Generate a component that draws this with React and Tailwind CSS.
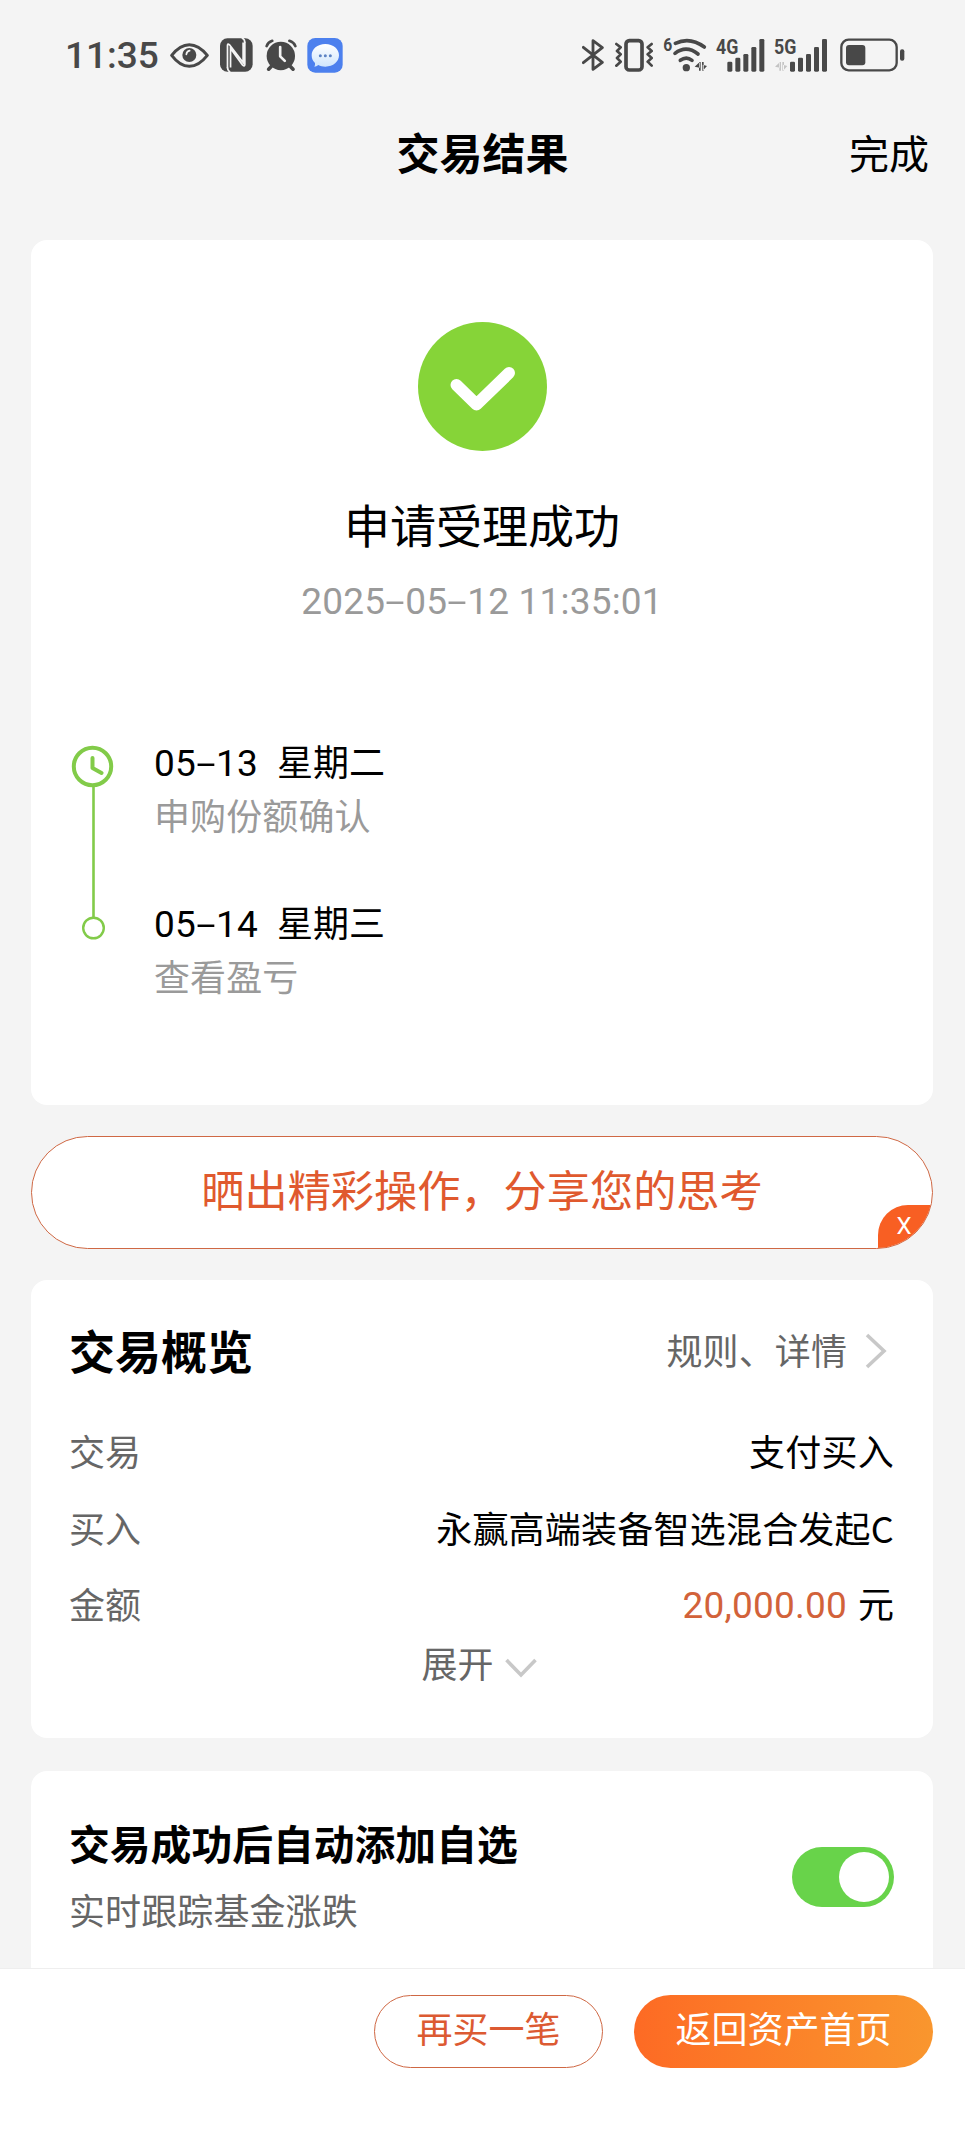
const details = [
  { label: '交易', value: '支付买入' },
  { label: '买入', value: '永赢高端装备智选混合发起C' },
]

const steps = [
  { date: '05-13', day: '星期二', note: '申购份额确认' },
  { date: '05-14', day: '星期三', note: '查看盈亏' },
]

// Digits are set in Roboto; hyphens are stretched to the width of a digit
function Digits({ children }) {
  return (
    <span className="font-['Roboto',sans-serif] text-[37px] leading-none tracking-[0.2px]">
      {children.split(/(-)/).map((part, i) =>
        part === '-' ? (
          <span key={i} className="inline-block w-5 text-center">
            <span className="inline-block origin-center scale-x-[1.9] scale-y-[0.9]">-</span>
          </span>
        ) : (
          part
        ),
      )}
    </span>
  )
}

function SignalBars({ x }) {
  return (
    <g>
      {[126, 114, 103, 82, 58].map((top, i) => (
        <rect key={top} x={x + i * 24} y={top} width="15" height={156 - top} rx="4" />
      ))}
    </g>
  )
}

function StatusBar() {
  return (
    <div className="flex h-[110px] items-start justify-between pt-[38px] pr-[60px] pl-[65px] text-[#484848]">
      <div className="flex h-[34px] items-center">
        <span className="w-[105px] font-['Roboto',sans-serif] text-[37px] leading-none font-medium">
          11:35
        </span>
        <svg viewBox="390 54 117 102" className="h-[34px] w-[39px]" fill="none">
          <path
            d="M395 106Q420 74 448 74Q476 74 502 106Q476 139 448 139Q420 139 395 106Z"
            stroke="currentColor"
            strokeWidth="9"
            strokeLinejoin="round"
          />
          <circle cx="448" cy="105" r="21" fill="currentColor" />
          <path d="M439 103Q440 94 449 92" stroke="#f4f4f4" strokeWidth="5" strokeLinecap="round" />
        </svg>
        <svg viewBox="540 57 97 100" className="ml-[11px] h-[34px] w-[33px]">
          <rect x="540" y="58" width="96" height="98" rx="22" fill="currentColor" />
          <path
            d="M562 146V79Q562 72 568 77L608 129V70M613 68V135Q613 143 606 136L571 88V144"
            fill="none"
            stroke="#f4f4f4"
            strokeWidth="5"
          />
          <path d="M604 57Q613 60 613 70M562 144Q562 153 570 157" fill="none" stroke="#f4f4f4" strokeWidth="5" />
        </svg>
        <svg viewBox="673 56 97 100" className="ml-3 h-[34px] w-[32px]" fill="none" strokeLinecap="round">
          <circle cx="721" cy="109" r="43" fill="currentColor" />
          <path d="M678 79Q682 67 695 63M747 63Q761 68 765 79" stroke="currentColor" strokeWidth="8" />
          <path d="M692 141L684 149M750 141L758 149" stroke="currentColor" strokeWidth="11" />
          <path d="M719 82V110L733 124" stroke="#f4f4f4" strokeWidth="8" strokeLinejoin="round" />
        </svg>
        <svg viewBox="798 54 108 105" className="ml-[10px] h-[35px] w-[36px]">
          <defs>
            <linearGradient id="bubble" x1="0" y1="0" x2="0" y2="1">
              <stop offset="0" stopColor="#fff" />
              <stop offset="1" stopColor="#cfe6fd" />
            </linearGradient>
          </defs>
          <rect x="799" y="54" width="106" height="104" rx="24" fill="#4c80ee" />
          <path
            d="M853 72C877 72 894 87 894 106S877 140 853 140C845 140 838 138 832 135Q826 140 820 140Q823 135 822 129C815 123 812 115 812 106C812 87 829 72 853 72Z"
            fill="url(#bubble)"
          />
          <g fill="#5c83c4">
            <circle cx="838" cy="107" r="4.5" />
            <circle cx="853" cy="107" r="4.5" />
            <circle cx="868" cy="107" r="4.5" />
          </g>
        </svg>
      </div>
      <div className="flex h-[34px] items-center">
        <svg viewBox="66 55 66 102" className="h-[34px] w-[22px]" fill="none" stroke="currentColor">
          <path d="M70 83L127 128L99 149V63L127 84L70 129" strokeWidth="8.5" strokeLinejoin="round" strokeLinecap="round" />
        </svg>
        <svg viewBox="165 55 117 102" className="ml-[11px] h-[34px] w-[39px]" fill="none" stroke="currentColor">
          <rect x="198" y="63" width="48" height="88" rx="10" strokeWidth="11" />
          <path
            d="M169 73L182 83L171 94L182 104L171 115L182 126L169 138M275 73L263 83L275 94L263 104L275 115L263 126L275 138"
            strokeWidth="8"
            strokeLinejoin="round"
            strokeLinecap="round"
          />
        </svg>
        <svg viewBox="306 37 138 138" className="ml-[8px] h-[46px] w-[46px]" fill="currentColor">
          <text x="310" y="95" fontSize="54" fontWeight="700" fontFamily="Roboto" textLength="27" lengthAdjust="spacingAndGlyphs">
            6
          </text>
          <g fill="none" stroke="currentColor" strokeWidth="11" strokeLinecap="round">
            <path d="M346 71Q390 50 433 82" />
            <path d="M345 101Q379 75 414 103" />
            <path d="M361 122Q379 109 396 122" />
          </g>
          <circle cx="379" cy="144" r="11" />
          <path d="M417 127V153H422V127ZM404 141L419 127V144ZM426 127V153H431V127ZM441 139L428 153V135Z" />
        </svg>
        <svg viewBox="466 37 150 138" className="ml-[7px] h-[46px] w-[50px]" fill="currentColor">
          <text x="469" y="104" fontSize="59" fontWeight="700" fontFamily="Roboto" textLength="67" lengthAdjust="spacingAndGlyphs">
            4G
          </text>
          <SignalBars x={503} />
        </svg>
        <svg viewBox="639 37 162 138" className="ml-[8px] h-[46px] w-[54px]" fill="currentColor">
          <text x="642" y="104" fontSize="59" fontWeight="700" fontFamily="Roboto" textLength="67" lengthAdjust="spacingAndGlyphs">
            5G
          </text>
          <path
            fill="#c4c4c4"
            d="M658 127V153H663V127ZM645 141L660 127V144ZM667 127V153H672V127ZM682 139L669 153V135Z"
          />
          <SignalBars x={690} />
        </svg>
        <svg viewBox="839 55 195 102" className="ml-[13px] h-[34px] w-[65px]" fill="currentColor">
          <rect x="843" y="60" width="166" height="92" rx="22" fill="none" stroke="currentColor" strokeWidth="7" />
          <rect x="857" y="76" width="58" height="61" rx="9" />
          <rect x="1019" y="89" width="13" height="34" rx="6" />
        </svg>
      </div>
    </div>
  )
}

function Header() {
  return (
    <header className="grid h-[130px] grid-cols-[1fr_auto_1fr] items-start text-black">
      <h1 className="col-start-2 text-[43px] leading-[82px] font-bold">交易结果</h1>
      <button className="justify-self-end pr-9 text-[40px] leading-[84px]">完成</button>
    </header>
  )
}

function ResultCard() {
  return (
    <section className="h-[865px] rounded-2xl bg-white pt-[82px]">
      <div className="flex flex-col items-center">
        <svg viewBox="0 0 129 129" className="size-[129px]">
          <circle cx="64.5" cy="64.5" r="64.5" fill="#86d438" />
          <path
            d="M38.5 63L58.5 82.5L91 51"
            fill="none"
            stroke="#fff"
            strokeWidth="12"
            strokeLinecap="round"
            strokeLinejoin="round"
          />
        </svg>
        <h2 className="mt-[39px] text-[46px] leading-[66px]">申请受理成功</h2>
        <p className="mt-[25px] flex h-[40px] items-center text-[#9a9a9a]">
          <Digits>2025-05-12 11:35:01</Digits>
        </p>
      </div>
      <div className="mt-[124px] flex pl-10">
        <svg viewBox="0 0 44 202" className="h-[202px] w-[44px]" fill="none" stroke="#82cb49">
          <circle cx="21.5" cy="21.5" r="18.7" strokeWidth="4" />
          <path d="M21.5 13V23L30.5 28" strokeWidth="4" strokeLinecap="round" strokeLinejoin="round" />
          <path d="M22.5 41V172.5" strokeWidth="2.6" />
          <circle cx="22.5" cy="183" r="10.3" strokeWidth="2.4" />
        </svg>
        <ul className="-mt-[2px] ml-[39px] text-[36px]">
          {steps.map((step) => (
            <li key={step.date} className="h-[161px]">
              <div className="flex h-[54px] items-baseline leading-[34px] text-black">
                <Digits>{step.date}</Digits>
                <span className="ml-[19px]">{step.day}</span>
              </div>
              <div className="leading-[34px] tracking-[0.1px] text-[#9a9a9a]">{step.note}</div>
            </li>
          ))}
        </ul>
      </div>
    </section>
  )
}

function ShareBanner() {
  return (
    <section className="relative mt-[31px] flex h-[113px] items-center justify-center overflow-hidden rounded-full border-[1.5px] border-[#cf6844] bg-white">
      <span className="pb-[7px] text-[43.2px] leading-none text-[#e0592e]">晒出精彩操作，分享您的思考</span>
      <button className="absolute right-0 bottom-0 h-[43px] w-[54px] rounded-tl-[30px] bg-[#f85f23] pr-[2px] pb-[2px] font-['Roboto',sans-serif] text-[24px] leading-none text-white">
        X
      </button>
    </section>
  )
}

function OverviewCard() {
  return (
    <section className="mt-[31px] h-[458px] rounded-2xl bg-white pr-[39px] pl-[38px] text-[36px] text-[#666]">
      <div className="flex h-[132px] items-center justify-between pt-[5px]">
        <h2 className="text-[46px] leading-none font-bold text-black">交易概览</h2>
        <button className="flex items-center gap-[18px] pr-[7px] leading-none tracking-[0.1px]">
          规则、详情
          <svg viewBox="0 0 22 36" className="mt-[5px] h-9 w-[22px]" fill="none" stroke="#c8c8c8" strokeWidth="3.6">
            <path d="M2 2L19 18L2 34" />
          </svg>
        </button>
      </div>
      <dl>
        {details.map((row) => (
          <div key={row.label} className="flex h-[76.5px] items-center justify-between leading-none">
            <dt>{row.label}</dt>
            <dd className="tracking-[0.22px] text-black">{row.value}</dd>
          </div>
        ))}
        <div className="flex h-[76.5px] items-center justify-between leading-none">
          <dt>金额</dt>
          <dd className="mt-[2px] flex items-baseline gap-[11px] text-[#d2623a]">
            <Digits>20,000.00</Digits>
            <span className="text-black">元</span>
          </dd>
        </div>
      </dl>
      <button className="mx-auto mt-[2px] flex items-center gap-[11px] pr-[5px] leading-none">
        展开
        <svg viewBox="0 0 32 20" className="mt-[13px] h-5 w-8" fill="none" stroke="#c8c8c8" strokeWidth="3.6">
          <path d="M1.5 2L16 17L30.5 2" />
        </svg>
      </button>
    </section>
  )
}

function WatchlistCard() {
  return (
    <section className="mt-[33px] flex h-[197px] justify-between rounded-t-2xl bg-white pr-[39px] pl-[38px]">
      <div>
        <h2 className="pt-[52px] text-[40.8px] leading-none font-bold text-black">交易成功后自动添加自选</h2>
        <p className="mt-[27px] text-[36px] leading-none tracking-[0.1px] text-[#666]">实时跟踪基金涨跌</p>
      </div>
      <button className="mt-[76px] flex h-[60px] w-[102px] items-center justify-end rounded-full bg-[#68d34a] pr-[5px]">
        <span className="size-[50px] rounded-full bg-white" />
      </button>
    </section>
  )
}

function Footer() {
  return (
    <footer className="flex h-[161px] items-start justify-end gap-[31px] border-t border-[#eee] bg-white pt-[26px] pr-8 text-[36px] leading-none">
      <button className="h-[73px] w-[229px] rounded-full border-[1.5px] border-[#cf6844] pb-[10px] text-[#dc5a32]">再买一笔</button>
      <button className="h-[73px] w-[299px] rounded-full bg-linear-to-r from-[#fd6a24] to-[#f9962e] pb-[10px] text-white">
        返回资产首页
      </button>
    </footer>
  )
}

export default function App() {
  return (
    <div className="h-[2129px] overflow-hidden bg-[#f4f4f4] font-['Noto_Sans_CJK_SC',sans-serif]">
      <StatusBar />
      <Header />
      <main className="pr-8 pl-[31px]">
        <ResultCard />
        <ShareBanner />
        <OverviewCard />
        <WatchlistCard />
      </main>
      <Footer />
    </div>
  )
}
